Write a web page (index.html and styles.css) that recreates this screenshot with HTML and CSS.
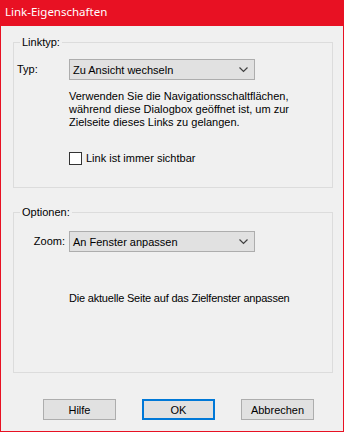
FILE: index.html
```html
<!DOCTYPE html>
<html lang="de">
<head>
<meta charset="utf-8">
<title>Link-Eigenschaften</title>
<link rel="stylesheet" href="styles.css">
</head>
<body>
<div class="window">
  <div class="titlebar">Link-Eigenschaften</div>
  <div class="content">
    <div class="group group-link">
      <span class="legend">Linktyp:</span>
      <div class="row">
        <span class="label label-left">Typ:</span>
        <div class="select">
          <span>Zu Ansicht wechseln</span>
          <svg class="chev" width="9" height="6" viewBox="0 0 9 6"><polyline points="0.5,0.5 4.5,4.5 8.5,0.5" fill="none" stroke="#404040" stroke-width="1.2"/></svg>
        </div>
      </div>
      <p class="desc">Verwenden Sie die Navigationsschaltflächen,<br>während diese Dialogbox geöffnet ist, um zur<br>Zielseite dieses Links zu gelangen.</p>
      <label class="check"><span class="box"></span><span>Link ist immer sichtbar</span></label>
    </div>
    <div class="group group-opt">
      <span class="legend">Optionen:</span>
      <div class="row row-zoom">
        <span class="label label-right">Zoom:</span>
        <div class="select">
          <span>An Fenster anpassen</span>
          <svg class="chev" width="9" height="6" viewBox="0 0 9 6"><polyline points="0.5,0.5 4.5,4.5 8.5,0.5" fill="none" stroke="#404040" stroke-width="1.2"/></svg>
        </div>
      </div>
      <p class="desc desc-zoom">Die aktuelle Seite auf das Zielfenster anpassen</p>
    </div>
    <div class="buttons">
      <button class="btn">Hilfe</button>
      <button class="btn btn-default">OK</button>
      <button class="btn">Abbrechen</button>
    </div>
  </div>
</div>
</body>
</html>
```
FILE: styles.css
```css
* { box-sizing: border-box; }
html, body { margin: 0; padding: 0; }
body {
  width: 344px;
  height: 432px;
  font-family: "Liberation Sans", Arial, sans-serif;
  font-size: 11px;
  color: #000;
  background: #f0f0f0;
}
.window {
  width: 344px;
  height: 432px;
  border: 1px solid #e81123;
  border-top: none;
  background: #f0f0f0;
  display: flex;
  flex-direction: column;
}
.titlebar {
  height: 26px;
  margin: 0 -1px;
  background: #e81123;
  color: #fff;
  font-family: "Noto Sans", "Liberation Sans", sans-serif;
  font-size: 11.5px;
  line-height: 24px;
  padding-left: 5px;
}
.content {
  padding: 16px 0 0 12px;
}
.group {
  position: relative;
  width: 320px;
  border: 1px solid #dcdcdc;
  padding-left: 3px;
}
.group-link {
  height: 146px;
  padding-top: 16px;
}
.group-opt {
  height: 161px;
  margin-top: 24px;
  padding-top: 18px;
}
.legend {
  position: absolute;
  top: -8px;
  left: 6px;
  padding: 0 2px;
  background: #f0f0f0;
  line-height: 14px;
}
.row {
  display: flex;
  align-items: center;
}
.label {
  width: 52px;
  line-height: 13px;
}
.label-right {
  text-align: right;
  padding-right: 4px;
}
.select {
  width: 186px;
  height: 21px;
  border: 1px solid #adadad;
  background: #e1e1e1;
  display: flex;
  align-items: center;
  justify-content: space-between;
  padding: 0 6px 0 3px;
}
.chev { display: block; }
.desc {
  margin: 10px 0 0 52px;
  line-height: 13px;
}
.desc-zoom {
  margin-top: 40px;
  letter-spacing: -0.2px;
}
.check {
  display: flex;
  align-items: center;
  gap: 4px;
  margin: 23px 0 0 52px;
  line-height: 13px;
}
.box {
  width: 13px;
  height: 13px;
  border: 1px solid #333;
  background: #fff;
}
.buttons {
  display: flex;
  gap: 26px;
  margin: 26px 0 0 30px;
}
.btn {
  width: 73px;
  height: 21px;
  border: 1px solid #adadad;
  background: #e1e1e1;
  font-family: "Liberation Sans", Arial, sans-serif;
  font-size: 11px;
  color: #000;
  padding: 0;
}
.btn-default {
  border: 2px solid #0078d7;
}
```
